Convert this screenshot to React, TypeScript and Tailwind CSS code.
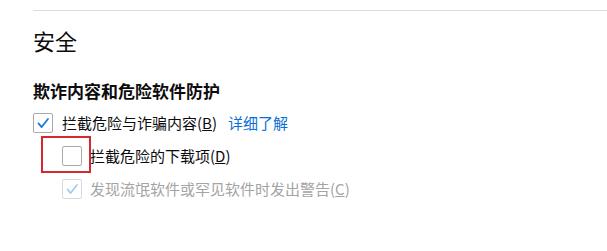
import React from "react";

function Check({ color }: { color: string }) {
  return (
    <svg width="20" height="20" viewBox="0 0 20 20" className="block">
      <polyline points="5,10.5 8.5,14.5 15.5,5.5" fill="none" stroke={color} strokeWidth="2" strokeLinecap="round" strokeLinejoin="round" />
    </svg>
  );
}

export default function App() {
  return (
    <div
      className="w-[607px] h-[251px] bg-white text-[#0c0c0d] overflow-hidden"
      style={{ fontFamily: '"Noto Sans CJK SC", "Noto Sans", sans-serif' }}
    >
      <div className="pt-[10px] pl-[33px]">
        <div className="h-px bg-[#dedede]" />
        <h1 className="mt-[14px] text-[22px] leading-[30px] font-normal">安全</h1>
        <h2 className="mt-[24px] text-[17px] leading-[24px] font-bold">欺诈内容和危险软件防护</h2>

        <div className="mt-[10px] flex items-center h-[20px]">
          <div className="w-[20px] h-[20px] border border-[#a9a9ab] rounded-[2px] bg-white flex items-center justify-center">
            <Check color="#1a7ad8" />
          </div>
          <span className="ml-[9px] text-[15px] leading-[20px]">
            拦截危险与诈骗内容(<u>B</u>)
          </span>
          <span className="ml-[11px] text-[15px] leading-[20px] text-[#0a6fd6]">详细了解</span>
        </div>

        <div className="mt-[13px] pl-[29px] flex items-center h-[20px]">
          <div className="relative w-[20px] h-[20px] border border-[#a9a9ab] rounded-[2px] bg-white">
            <div className="absolute left-[-22px] top-[-11px] w-[50px] h-[37px] border-2 border-[#d42a2f]" />
          </div>
          <span className="ml-[8px] text-[15px] leading-[20px]">
            拦截危险的下载项(<u>D</u>)
          </span>
        </div>

        <div className="mt-[13px] pl-[29px] flex items-center h-[20px]">
          <div className="w-[20px] h-[20px] border border-[#d8d8d8] rounded-[2px] bg-white flex items-center justify-center">
            <Check color="#a6cdef" />
          </div>
          <span className="ml-[8px] text-[15px] leading-[20px] text-[#a4a4a4]">
            发现流氓软件或罕见软件时发出警告(<u>C</u>)
          </span>
        </div>
      </div>
    </div>
  );
}
